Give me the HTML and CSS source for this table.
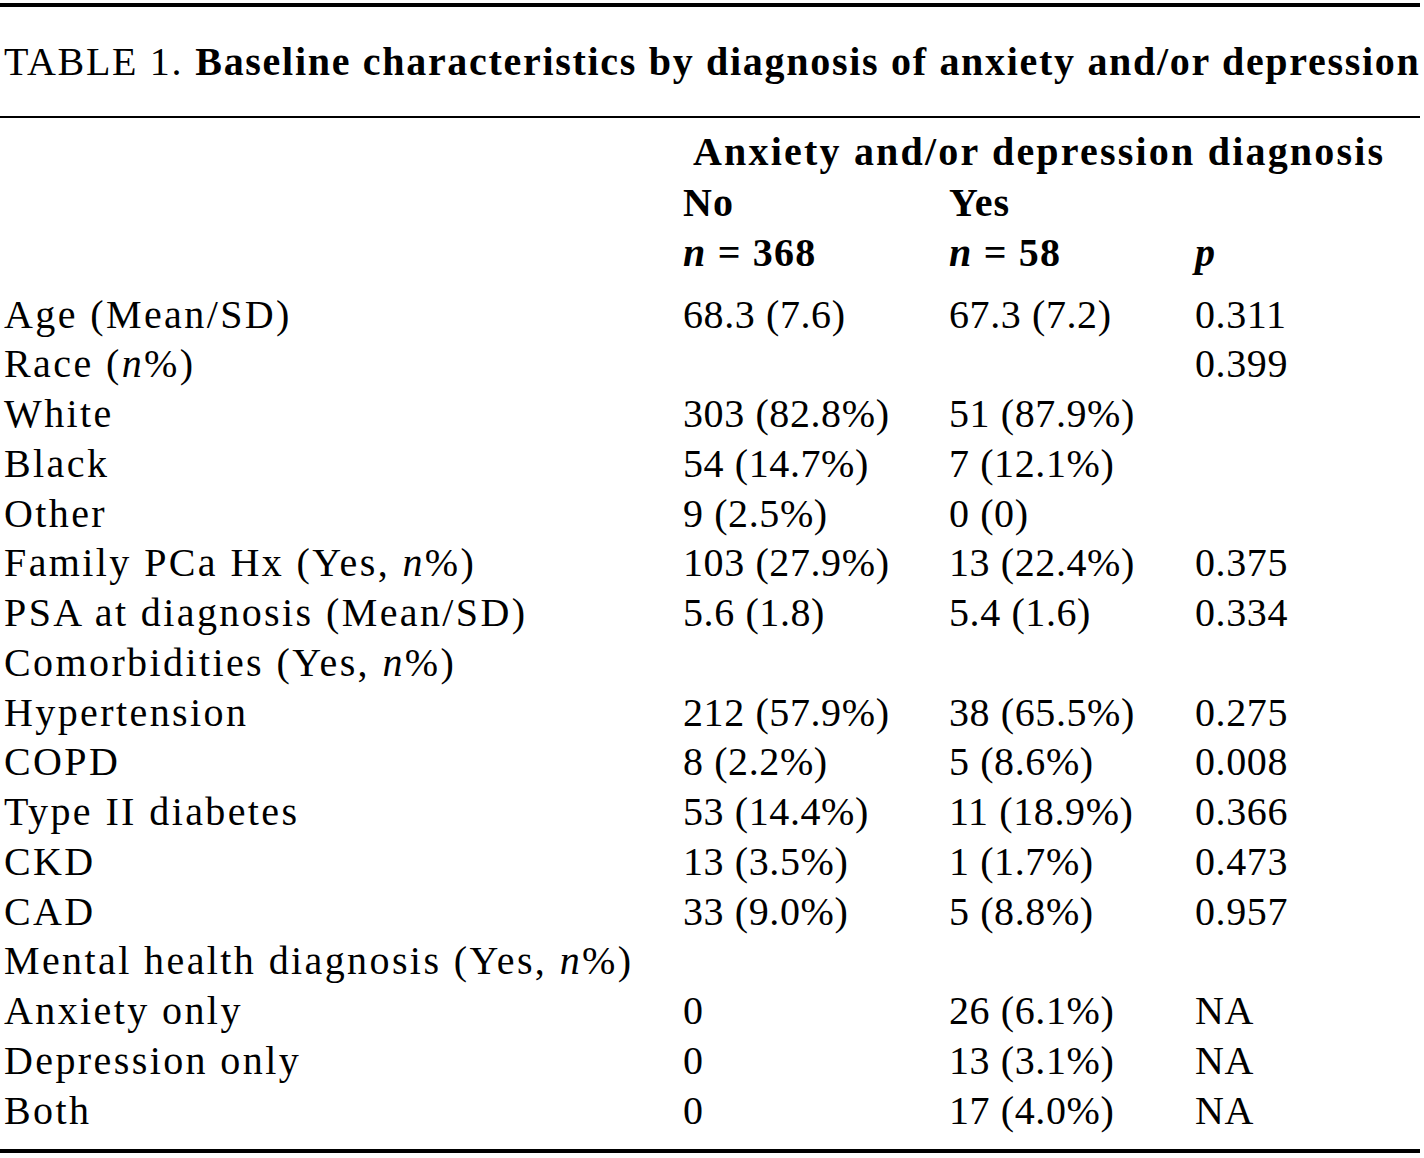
FILE: index.html
```html
<!DOCTYPE html>
<html>
<head>
<meta charset="utf-8">
<link rel="stylesheet" href="styles.css">
</head>
<body>
<div class="sheet">
  <div class="caption"><span class="lbl">TABLE 1.</span><b>Baseline characteristics by diagnosis of anxiety and/or depression</b></div>
  <table class="tbl">
    <colgroup>
      <col class="c1"><col class="c2"><col class="c3"><col class="c4">
    </colgroup>
    <thead>
      <tr class="h first"><th></th><th colspan="3" class="span">Anxiety and/or depression diagnosis</th></tr>
      <tr class="h"><th></th><th>No</th><th>Yes</th><th></th></tr>
      <tr class="h last"><th></th><th><i>n</i> = 368</th><th><i>n</i> = 58</th><th><i>p</i></th></tr>
    </thead>
    <tbody>
      <tr class="first"><td>Age (Mean/SD)</td><td>68.3 (7.6)</td><td>67.3 (7.2)</td><td>0.311</td></tr>
      <tr><td>Race (<i>n</i>%)</td><td></td><td></td><td>0.399</td></tr>
      <tr><td>White</td><td>303 (82.8%)</td><td>51 (87.9%)</td><td></td></tr>
      <tr><td>Black</td><td>54 (14.7%)</td><td>7 (12.1%)</td><td></td></tr>
      <tr><td>Other</td><td>9 (2.5%)</td><td>0 (0)</td><td></td></tr>
      <tr><td>Family PCa Hx (Yes, <i>n</i>%)</td><td>103 (27.9%)</td><td>13 (22.4%)</td><td>0.375</td></tr>
      <tr><td>PSA at diagnosis (Mean/SD)</td><td>5.6 (1.8)</td><td>5.4 (1.6)</td><td>0.334</td></tr>
      <tr><td>Comorbidities (Yes, <i>n</i>%)</td><td></td><td></td><td></td></tr>
      <tr><td>Hypertension</td><td>212 (57.9%)</td><td>38 (65.5%)</td><td>0.275</td></tr>
      <tr><td>COPD</td><td>8 (2.2%)</td><td>5 (8.6%)</td><td>0.008</td></tr>
      <tr><td>Type II diabetes</td><td>53 (14.4%)</td><td>11 (18.9%)</td><td>0.366</td></tr>
      <tr><td>CKD</td><td>13 (3.5%)</td><td>1 (1.7%)</td><td>0.473</td></tr>
      <tr><td>CAD</td><td>33 (9.0%)</td><td>5 (8.8%)</td><td>0.957</td></tr>
      <tr><td>Mental health diagnosis (Yes, <i>n</i>%)</td><td></td><td></td><td></td></tr>
      <tr><td>Anxiety only</td><td>0</td><td>26 (6.1%)</td><td>NA</td></tr>
      <tr><td>Depression only</td><td>0</td><td>13 (3.1%)</td><td>NA</td></tr>
      <tr class="last"><td>Both</td><td>0</td><td>17 (4.0%)</td><td>NA</td></tr>
    </tbody>
  </table>
</div>
</body>
</html>
```
FILE: styles.css
```css
html, body {
  margin: 0;
  padding: 0;
  background: #ffffff;
}
body {
  font-family: "Liberation Serif", "Times New Roman", serif;
  color: #000;
}
.sheet {
  width: 1420px;
  padding-top: 3px;
}
.caption {
  border-top: 4px solid #000;
  border-bottom: 2px solid #000;
  height: 109px;
  line-height: 109px;
  font-size: 40px;
  letter-spacing: 1.7px;
  padding-left: 4px;
  white-space: nowrap;
}
.caption .lbl {
  margin-right: 12px;
}
.tbl {
  width: 1420px;
  border-collapse: collapse;
  border-bottom: 4px solid #000;
  font-size: 40px;
  table-layout: fixed;
}
.c1 { width: 683px; }
.c2 { width: 266px; }
.c3 { width: 246px; }
.c4 { width: 225px; }
.tbl th, .tbl td {
  padding: 0;
  text-align: left;
  vertical-align: middle;
  white-space: nowrap;
}
.tbl td {
  height: 49.75px;
  line-height: 49.75px;
  letter-spacing: 0.6px;
}
.tbl td:first-child {
  padding-left: 4px;
  letter-spacing: 2.4px;
}
.tbl th {
  font-weight: bold;
  height: 50.5px;
  line-height: 50.5px;
  letter-spacing: 1.2px;
}
.tbl tr.h.first th {
  padding-top: 9px;
}
.tbl tr.h.last th {
  padding-bottom: 11px;
}
.tbl th.span {
  padding-left: 10px;
  letter-spacing: 2.2px;
}
.tbl tbody tr.last td {
  padding-bottom: 14px;
}
```
